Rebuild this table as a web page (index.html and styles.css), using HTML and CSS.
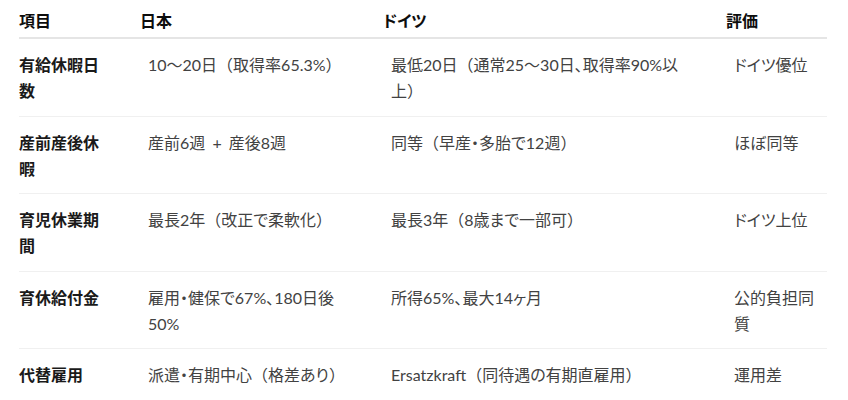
FILE: index.html
```html
<!DOCTYPE html>
<html lang="ja">
<head>
<meta charset="utf-8">
<link rel="stylesheet" href="styles.css">
</head>
<body>
<div class="wrap">
<table class="cmp">
  <colgroup>
    <col class="c1"><col class="c2"><col class="c3"><col class="c4">
  </colgroup>
  <thead>
    <tr><th>項目</th><th>日本</th><th><span class="p">ドイツ</span></th><th>評価</th></tr>
  </thead>
  <tbody>
    <tr>
      <td>有給休暇日<br>数</td>
      <td>10〜20日（取得率65.3%）</td>
      <td>最低20日（通常25〜30日<span class="p">、</span>取得率90%以<br>上）</td>
      <td><span class="p">ドイツ</span>優位</td>
    </tr>
    <tr>
      <td>産前産後休<br>暇</td>
      <td class="ws">産前6週 + 産後8週</td>
      <td>同等（早産<span class="p">・</span>多胎<span class="p">で</span>12週）</td>
      <td><span class="p">ほぼ</span>同等</td>
    </tr>
    <tr>
      <td>育児休業期<br>間</td>
      <td>最長2年（改正<span class="p">で</span>柔軟化）</td>
      <td>最長3年（8歳<span class="p">まで</span>一部可）</td>
      <td><span class="p">ドイツ</span>上位</td>
    </tr>
    <tr>
      <td>育休給付金</td>
      <td>雇用<span class="p">・</span>健保<span class="p">で</span>67%<span class="p">、</span>180日後<br>50%</td>
      <td>所得65%<span class="p">、</span>最大14<span class="p">ヶ</span>月</td>
      <td>公的負担同<br>質</td>
    </tr>
    <tr>
      <td>代替雇用</td>
      <td>派遣<span class="p">・</span>有期中心（格差<span class="p">あり</span>）</td>
      <td>Ersatzkraft（同待遇<span class="p">の</span>有期直雇用）</td>
      <td>運用差</td>
    </tr>
  </tbody>
</table>
</div>
</body>
</html>
```
FILE: styles.css
```css
html, body {
  margin: 0;
  padding: 0;
  background: #ffffff;
}
body {
  font-family: "Lato", "Noto Sans CJK JP", sans-serif;
  font-size: 16px;
  color: #424242;
}
.wrap {
  padding-left: 19px;
}
.cmp {
  width: 808px;
  table-layout: fixed;
  border-collapse: collapse;
}
.c1 { width: 113px; }
.c2 { width: 243px; }
.c3 { width: 343px; }
.c4 { width: 109px; }
.cmp th {
  text-align: left;
  font-weight: 700;
  color: #0d0d0d;
  line-height: 26px;
  padding: 8px 8px 3px 8px;
  border-bottom: 2px solid #e5e5e5;
  white-space: nowrap;
}
.cmp th:first-child {
  padding-left: 0;
}
.cmp td {
  line-height: 26px;
  padding: 13px 8px 11.5px 16px;
  border-bottom: 1px solid #f0f0f0;
  vertical-align: top;
  white-space: nowrap;
}
.cmp td:first-child {
  padding-left: 0;
  font-weight: 700;
  color: #1a1a1a;
}
.cmp tbody tr:last-child td {
  border-bottom: none;
}
.cmp td.ws {
  word-spacing: 3px;
}
.p {
  font-feature-settings: "palt";
}
```
